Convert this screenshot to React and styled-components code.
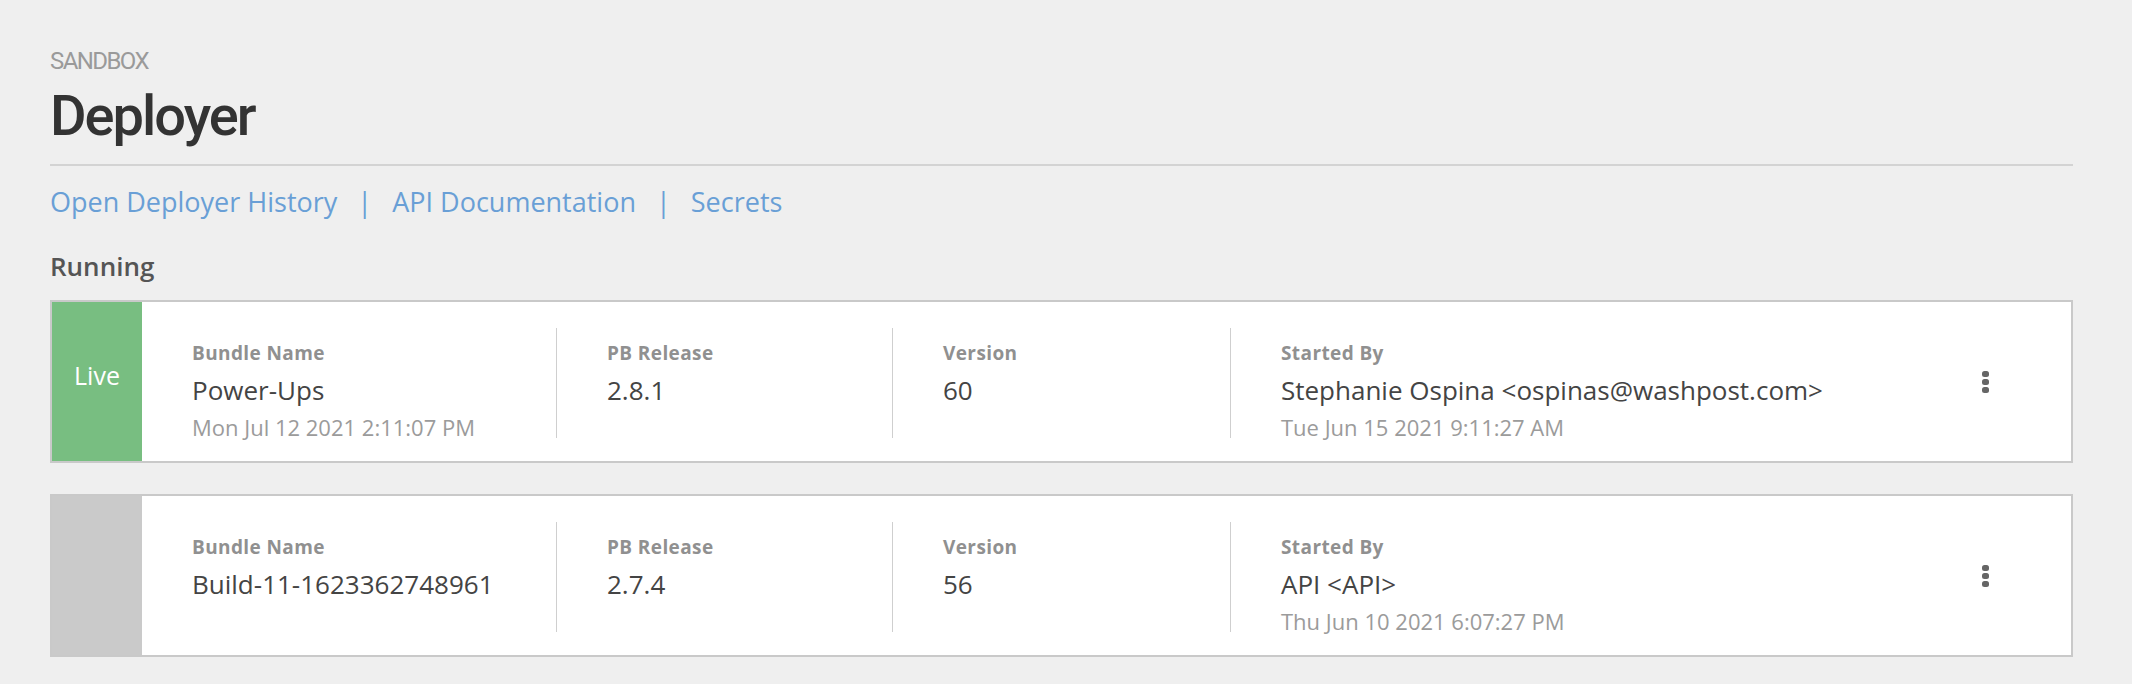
import styled, { createGlobalStyle } from 'styled-components';

const deployments = [
  {
    live: true,
    bundle: 'Power-Ups',
    bundleDate: 'Mon Jul 12 2021 2:11:07 PM',
    release: '2.8.1',
    version: '60',
    startedBy: 'Stephanie Ospina <ospinas@washpost.com>',
    startedDate: 'Tue Jun 15 2021 9:11:27 AM',
  },
  {
    live: false,
    bundle: 'Build-11-1623362748961',
    release: '2.7.4',
    version: '56',
    startedBy: 'API <API>',
    startedDate: 'Thu Jun 10 2021 6:07:27 PM',
  },
];

const GlobalStyle = createGlobalStyle`
  body {
    margin: 0;
    background: #efefef;
    font-family: 'Open Sans', 'Noto Sans', sans-serif;
  }
`;

const Page = styled.div`
  padding: 48px 59px 20px 50px;
`;

const Eyebrow = styled.div`
  font-family: Roboto, sans-serif;
  font-size: 24px;
  line-height: 27px;
  letter-spacing: -1.6px;
  text-transform: uppercase;
  color: #9a9a9a;
`;

const Title = styled.h1`
  margin: 8px 0 0;
  font-family: Roboto, sans-serif;
  font-size: 56px;
  line-height: 66px;
  font-weight: 500;
  letter-spacing: -2px;
  color: #333;
`;

const Rule = styled.hr`
  margin: 15px 0 0;
  border: 0;
  height: 2px;
  background: #d3d3d3;
`;

const LinkBar = styled.nav`
  display: flex;
  align-items: center;
  margin-top: 17px;
  font-size: 27px;
  line-height: 37px;
  color: #699fd6;
`;

const NavLink = styled.a`
  color: inherit;
  text-decoration: none;
`;

const Pipe = styled.span`
  margin: 0 20px;
`;

const SectionTitle = styled.h2`
  margin: 29px 0 17px;
  font-size: 26px;
  line-height: 34px;
  font-weight: 600;
  color: #555;
`;

const List = styled.div`
  display: flex;
  flex-direction: column;
  gap: 31px;
`;

const Card = styled.div`
  display: flex;
  height: 159px;
  background: #fff;
  border: 2px solid #c9c9c9;
`;

const Status = styled.div`
  flex: 0 0 90px;
  display: flex;
  align-items: center;
  justify-content: center;
  padding-bottom: 13px;
  box-sizing: border-box;
  background: ${(p) => (p.$live ? '#78be81' : '#cacaca')};
  color: #fff;
  font-size: 25px;
`;

const Body = styled.div`
  flex: 1;
  display: flex;
  align-items: stretch;
  padding: 26px 0 23px;
`;

const Column = styled.div`
  flex: ${(p) => (p.$width ? `0 0 ${p.$width}px` : '1')};
  box-sizing: border-box;
  padding: 12px 0 0 50px;
  border-left: ${(p) => (p.$first ? 'none' : '1px solid #cfcfcf')};
  display: flex;
  flex-direction: column;
  min-width: 0;
`;

const Label = styled.div`
  font-size: 19px;
  line-height: 26px;
  font-weight: 700;
  letter-spacing: 0.4px;
  color: #909090;
`;

const Value = styled.div`
  margin-top: 7px;
  font-size: 26px;
  line-height: 35px;
  color: #444;
  white-space: nowrap;
`;

const Stamp = styled.div`
  margin-top: 4px;
  font-size: 22px;
  line-height: 30px;
  color: #9b9b9b;
  white-space: nowrap;
`;

const Menu = styled.button`
  align-self: center;
  width: 40px;
  margin: 0 66px 0 0;
  padding: 0;
  border: 0;
  background: none;
  display: flex;
  flex-direction: column;
  align-items: center;
  gap: 2px;
  cursor: pointer;
`;

const Dot = styled.span`
  width: 7px;
  height: 6px;
  border-radius: 2.5px;
  background: #666;
`;

function Field({ label, value, stamp, width, first }) {
  return (
    <Column $width={width} $first={first}>
      <Label>{label}</Label>
      <Value>{value}</Value>
      {stamp && <Stamp>{stamp}</Stamp>}
    </Column>
  );
}

function DeploymentCard({ d }) {
  return (
    <Card>
      <Status $live={d.live}>{d.live ? 'Live' : ''}</Status>
      <Body>
        <Field first width={414} label="Bundle Name" value={d.bundle} stamp={d.bundleDate} />
        <Field width={336} label="PB Release" value={d.release} />
        <Field width={338} label="Version" value={d.version} />
        <Field label="Started By" value={d.startedBy} stamp={d.startedDate} />
      </Body>
      <Menu aria-label="More actions">
        <Dot />
        <Dot />
        <Dot />
      </Menu>
    </Card>
  );
}

export default function App() {
  return (
    <>
      <GlobalStyle />
      <Page>
        <Eyebrow>Sandbox</Eyebrow>
        <Title>Deployer</Title>
        <Rule />
        <LinkBar>
          <NavLink href="#">Open Deployer History</NavLink>
          <Pipe>|</Pipe>
          <NavLink href="#">API Documentation</NavLink>
          <Pipe>|</Pipe>
          <NavLink href="#">Secrets</NavLink>
        </LinkBar>
        <SectionTitle>Running</SectionTitle>
        <List>
          {deployments.map((d) => (
            <DeploymentCard key={d.bundle} d={d} />
          ))}
        </List>
      </Page>
    </>
  );
}
